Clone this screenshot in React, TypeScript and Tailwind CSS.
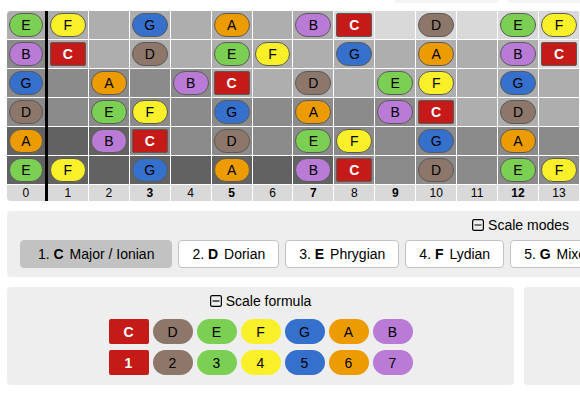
import React from "react";

type Note = "A" | "B" | "C" | "D" | "E" | "F" | "G";

const NOTE_CLASSES: Record<Note, string> = {
  A: "bg-[#ec9b00] text-black",
  B: "bg-[#b97bd6] text-black",
  C: "bg-[#c41b19] text-white font-bold",
  D: "bg-[#8d776a] text-black",
  E: "bg-[#7bd054] text-black",
  F: "bg-[#faf029] text-black",
  G: "bg-[#3670cd] text-black",
};

const SEMITONES: Record<number, Note> = { 0: "C", 2: "D", 4: "E", 5: "F", 7: "G", 9: "A", 11: "B" };
const SCALE: Note[] = ["C", "D", "E", "F", "G", "A", "B"];

// Open-string pitches in semitones, highest string first.
const STRINGS = [40, 35, 31, 26, 21, 16];
const FRETS = Array.from({ length: 14 }, (_, i) => i);
const MARKED_FRETS = [3, 5, 7, 9, 12];

// Shade of the cell for each octave.
const OCTAVE_CLASSES: Record<number, string> = {
  1: "bg-[#626262]",
  2: "bg-[#8b8b8b]",
  3: "bg-[#aeaeae]",
  4: "bg-[#d9d9d9]",
};

const MODES: { root: Note; name: string }[] = [
  { root: "C", name: "Major / Ionian" },
  { root: "D", name: "Dorian" },
  { root: "E", name: "Phrygian" },
  { root: "F", name: "Lydian" },
  { root: "G", name: "Mixolydian" },
];

function edge(fret: number) {
  return fret === 0 ? "border-r-3 border-r-black" : "border-r border-r-white";
}

function Fretboard() {
  return (
    <table className="w-full table-fixed border-separate border-spacing-0 overflow-hidden rounded-l-[4px]">
      <tbody>
        {STRINGS.map((open) => (
          <tr key={open}>
            {FRETS.map((fret) => {
              const pitch = open + fret;
              const note = SEMITONES[pitch % 12];
              return (
                <td key={fret} className={`h-[29px] p-0 align-top ${edge(fret)}`}>
                  <div className={`h-7 p-[2px] ${OCTAVE_CLASSES[Math.floor(pitch / 12)]}`}>
                    {note && (
                      <span
                        className={`flex h-6 items-center justify-center border border-[#5a5a5a] text-sm ${NOTE_CLASSES[note]} ${note === "C" ? "rounded-[2px]" : "rounded-[13px]"}`}
                      >
                        {note}
                      </span>
                    )}
                  </div>
                </td>
              );
            })}
          </tr>
        ))}
      </tbody>
      <tfoot>
        <tr>
          {FRETS.map((fret) => (
            <th
              key={fret}
              scope="col"
              className={`h-4 bg-[#d9d9d9] p-0 text-center text-xs leading-4 ${edge(fret)} ${MARKED_FRETS.includes(fret) ? "font-bold" : "font-normal"}`}
            >
              {fret}
            </th>
          ))}
        </tr>
      </tfoot>
    </table>
  );
}

function Toggle({ title }: { title: string }) {
  return (
    <button type="button" className="flex h-5 items-center gap-1 text-sm leading-5">
      <svg width="12" height="12" viewBox="0 0 12 12" fill="none" stroke="black" strokeWidth="1.2" aria-hidden="true">
        <rect x="0.6" y="0.6" width="10.8" height="10.8" rx="1.6" />
        <path d="M2.5 6h7" />
      </svg>
      {title}
    </button>
  );
}

function FormulaRow({ labels }: { labels: string[] }) {
  return (
    <div className="flex justify-center gap-1">
      {labels.map((label, i) => (
        <span
          key={label}
          className={`flex h-[25px] w-10 items-center justify-center text-sm ${NOTE_CLASSES[SCALE[i]]} ${i === 0 ? "rounded-[2px]" : "rounded-[13px]"}`}
        >
          {label}
        </span>
      ))}
    </div>
  );
}

export default function App() {
  return (
    <main className="overflow-hidden bg-white pl-[7px] font-['Liberation_Sans',Arial,sans-serif] text-black">
      <div className="mb-2 flex h-[3px] justify-end gap-[9px]">
        <div className="w-[104px] rounded-b-[4px] bg-[#f4f4f4]" />
        <div className="w-[73px] rounded-bl-[4px] bg-[#f4f4f4]" />
      </div>
      <Fretboard />
      <section className="mt-[10px] overflow-hidden rounded-l-[4px] bg-[#eeeeee] pt-1 pb-[9px] pl-[13px]">
        <div className="flex justify-end pr-[11px]">
          <Toggle title="Scale modes" />
        </div>
        <div className="mt-[5px] flex gap-[6px]">
          {MODES.map((mode, i) => (
            <button
              key={mode.root}
              type="button"
              className={`h-7 shrink-0 rounded-[4px] border border-[#c2c2c2] text-sm whitespace-pre ${i === 0 ? "bg-[#c2c2c2] px-[17px]" : "bg-white px-[13px]"}`}
            >
              {i + 1}. <b className="mr-[2px]">{mode.root}</b> {mode.name}
            </button>
          ))}
        </div>
      </section>
      <div className="mt-[10px] flex gap-[10px]">
        <section className="flex grow flex-col items-center rounded-[4px] bg-[#eeeeee] pt-1 pb-[10px]">
          <Toggle title="Scale formula" />
          <div className="mt-2 flex flex-col gap-[6px]">
            <FormulaRow labels={SCALE} />
            <FormulaRow labels={SCALE.map((_, i) => String(i + 1))} />
          </div>
        </section>
        <section className="w-14 rounded-l-[4px] bg-[#eeeeee]" />
      </div>
    </main>
  );
}
